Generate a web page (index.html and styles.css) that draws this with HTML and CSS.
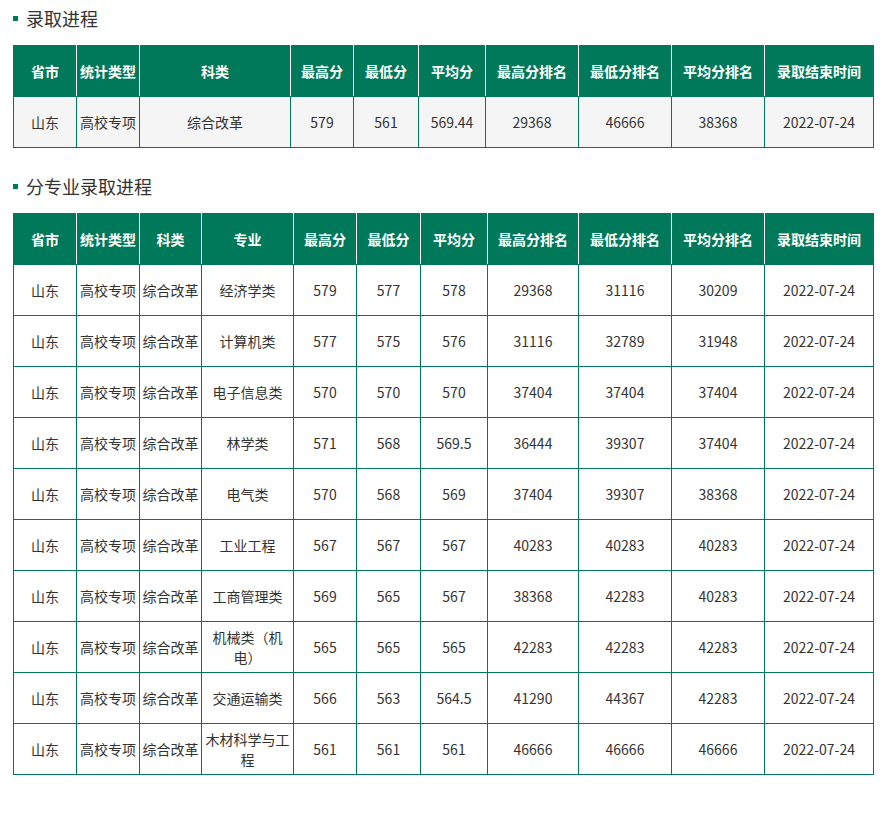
FILE: index.html
```html
<!DOCTYPE html>
<html lang="zh">
<head>
<meta charset="utf-8">
<link rel="stylesheet" href="styles.css">
</head>
<body>
<div class="page">
  <h2 class="sec-title">录取进程</h2>
  <table class="data t1">
    <thead>
      <tr>
        <th class="w63">省市</th><th class="w63">统计类型</th><th class="w151">科类</th><th class="w63">最高分</th><th class="w65">最低分</th><th class="w67">平均分</th><th class="w93">最高分排名</th><th class="w93">最低分排名</th><th class="w93">平均分排名</th><th class="w110">录取结束时间</th>
      </tr>
    </thead>
    <tbody>
      <tr class="grey"><td>山东</td><td>高校专项</td><td>综合改革</td><td>579</td><td>561</td><td>569.44</td><td>29368</td><td>46666</td><td>38368</td><td>2022-07-24</td></tr>
    </tbody>
  </table>

  <h2 class="sec-title second">分专业录取进程</h2>
  <table class="data t2">
    <thead>
      <tr>
        <th class="w63">省市</th><th class="w63">统计类型</th><th class="w62">科类</th><th class="w92">专业</th><th class="w63">最高分</th><th class="w64">最低分</th><th class="w67">平均分</th><th class="w91">最高分排名</th><th class="w93">最低分排名</th><th class="w93">平均分排名</th><th class="w110">录取结束时间</th>
      </tr>
    </thead>
    <tbody>
      <tr><td>山东</td><td>高校专项</td><td>综合改革</td><td>经济学类</td><td>579</td><td>577</td><td>578</td><td>29368</td><td>31116</td><td>30209</td><td>2022-07-24</td></tr>
      <tr><td>山东</td><td>高校专项</td><td>综合改革</td><td>计算机类</td><td>577</td><td>575</td><td>576</td><td>31116</td><td>32789</td><td>31948</td><td>2022-07-24</td></tr>
      <tr><td>山东</td><td>高校专项</td><td>综合改革</td><td>电子信息类</td><td>570</td><td>570</td><td>570</td><td>37404</td><td>37404</td><td>37404</td><td>2022-07-24</td></tr>
      <tr><td>山东</td><td>高校专项</td><td>综合改革</td><td>林学类</td><td>571</td><td>568</td><td>569.5</td><td>36444</td><td>39307</td><td>37404</td><td>2022-07-24</td></tr>
      <tr><td>山东</td><td>高校专项</td><td>综合改革</td><td>电气类</td><td>570</td><td>568</td><td>569</td><td>37404</td><td>39307</td><td>38368</td><td>2022-07-24</td></tr>
      <tr><td>山东</td><td>高校专项</td><td>综合改革</td><td>工业工程</td><td>567</td><td>567</td><td>567</td><td>40283</td><td>40283</td><td>40283</td><td>2022-07-24</td></tr>
      <tr><td>山东</td><td>高校专项</td><td>综合改革</td><td>工商管理类</td><td>569</td><td>565</td><td>567</td><td>38368</td><td>42283</td><td>40283</td><td>2022-07-24</td></tr>
      <tr><td>山东</td><td>高校专项</td><td>综合改革</td><td>机械类（机电）</td><td>565</td><td>565</td><td>565</td><td>42283</td><td>42283</td><td>42283</td><td>2022-07-24</td></tr>
      <tr><td>山东</td><td>高校专项</td><td>综合改革</td><td>交通运输类</td><td>566</td><td>563</td><td>564.5</td><td>41290</td><td>44367</td><td>42283</td><td>2022-07-24</td></tr>
      <tr><td>山东</td><td>高校专项</td><td>综合改革</td><td>木材科学与工程</td><td>561</td><td>561</td><td>561</td><td>46666</td><td>46666</td><td>46666</td><td>2022-07-24</td></tr>
    </tbody>
  </table>
</div>
</body>
</html>
```

FILE: styles.css
```css
html, body {
  margin: 0;
  padding: 0;
  background: #ffffff;
}

body {
  font-family: "Noto Sans CJK SC", "Noto Sans", sans-serif;
  color: #333333;
}

.page {
  padding: 0 13px;
}

.sec-title {
  display: flex;
  align-items: center;
  margin: 0 0 9px 0;
  height: 36px;
  font-size: 18px;
  font-weight: normal;
  color: #333333;
  line-height: 36px;
}

.sec-title::before {
  content: "";
  width: 5px;
  height: 5px;
  background: #00785a;
  margin-right: 8px;
  margin-top: 1px;
}

.sec-title.second {
  margin-top: 20px;
}

.data {
  border-collapse: collapse;
  table-layout: fixed;
  width: 860px;
  font-size: 14px;
}

.data th,
.data td {
  box-sizing: border-box;
}

.data th {
  background: #00785a;
  color: #ffffff;
  font-weight: bold;
  height: 51px;
  padding: 0 2px;
  border-left: 1px solid #ffffff;
  border-right: 1px solid #ffffff;
  border-top: 1px solid #00785a;
  border-bottom: 1px solid #00785a;
  text-align: center;
  line-height: 20px;
}

.data th:first-child {
  border-left-color: #00785a;
}

.data th:last-child {
  border-right-color: #00785a;
}

.data td {
  height: 51px;
  padding: 0 2px;
  border: 1px solid #00785a;
  text-align: center;
  line-height: 20px;
  color: #333333;
}

.data tr.grey td {
  background: #f5f5f5;
}

.w62 { width: 62px; }
.w63 { width: 63px; }
.w64 { width: 64px; }
.w65 { width: 65px; }
.w67 { width: 67px; }
.w91 { width: 91px; }
.w92 { width: 92px; }
.w93 { width: 93px; }
.w110 { width: 109px; }
.w151 { width: 151px; }
```
